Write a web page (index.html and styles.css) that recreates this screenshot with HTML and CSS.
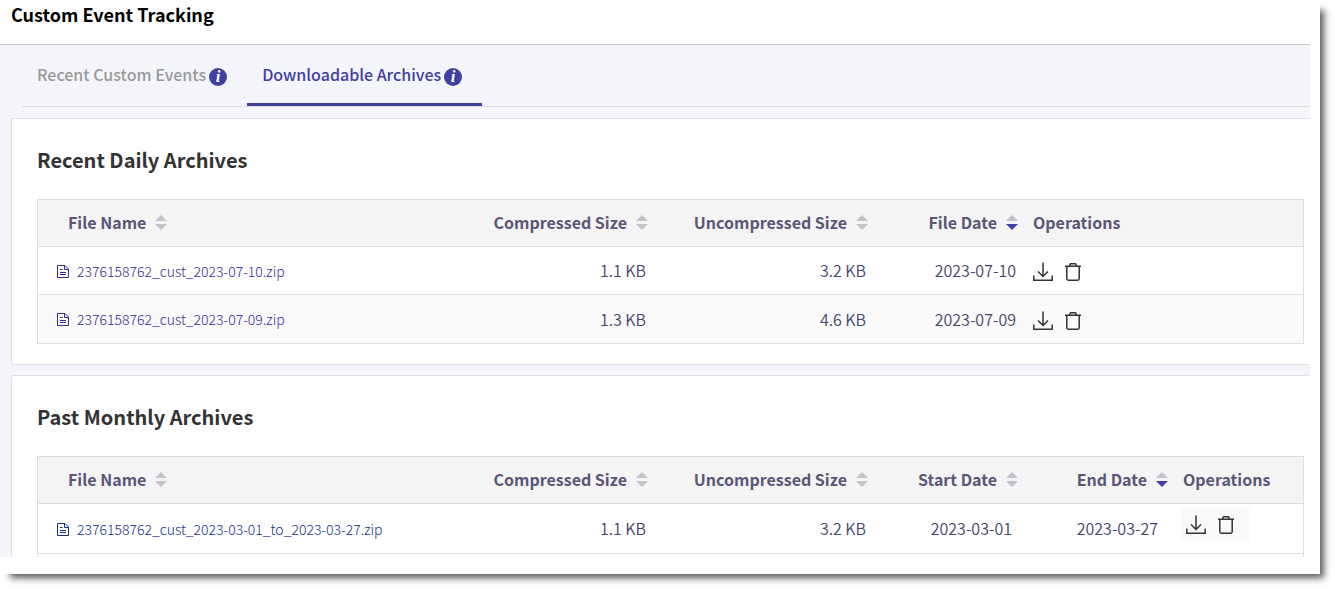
FILE: index.html
```html
<!DOCTYPE html>
<html lang="en">
<head>
    <meta charset="UTF-8">
    <meta name="viewport" content="width=device-width, initial-scale=1.0">
    <title>Custom Event Tracking</title>
    <link rel="stylesheet" href="styles.css">
</head>
<body>

<!-- Shared icons -->
<svg class="icon-defs" aria-hidden="true">
    <symbol id="icon-sort" viewBox="0 0 12 15">
        <path class="sort-up" d="M6 0 L12 6 H0 Z"/>
        <path class="sort-down" d="M0 9 H12 L6 15 Z"/>
    </symbol>
    <symbol id="icon-sort-desc" viewBox="0 0 12 15">
        <path class="sort-up" d="M6 0 L12 6 H0 Z"/>
        <path class="sort-active" d="M0 9 H12 L6 15 Z"/>
    </symbol>
    <symbol id="icon-file" viewBox="0 0 12 14">
        <path d="M0.5 1.5 H8 L11.5 5 V13.5 H0.5 Z M7.5 1.5 V5.5 H11.5 M3 5.5 H5.5 M3 8.5 H9 M3 10.5 H9" fill="none" stroke="currentColor"/>
    </symbol>
    <symbol id="icon-download" viewBox="0 0 20 20">
        <path d="M10 0.5 V14 M5 9.5 L10 14.5 L15 9.5 M0.8 13.5 V18.3 H19.2 V13.5" fill="none" stroke="currentColor" stroke-width="1.5"/>
    </symbol>
    <symbol id="icon-trash" viewBox="0 0 16 20">
        <path d="M0 4.3 H16 M4.5 4 L5.5 1.7 H10.5 L11.5 4 M1.8 4.3 V16.5 Q1.8 18.2 3.3 18.2 H12.7 Q14.2 18.2 14.2 16.5 V4.3" fill="none" stroke="currentColor" stroke-width="1.5"/>
    </symbol>
</svg>

<div class="window">
    <div class="page">
        <header class="page-header">
            <h1>Custom Event Tracking</h1>
        </header>

        <main class="content">
            <!-- Tabs -->
            <nav class="tabs">
                <a href="#recent" class="tab">Recent Custom Events <span class="info">i</span></a>
                <a href="#archives" class="tab active">Downloadable Archives <span class="info">i</span></a>
            </nav>

            <!-- Daily archives -->
            <section class="card">
                <h2>Recent Daily Archives</h2>
                <table class="archives">
                    <thead>
                        <tr>
                            <th class="col-name"><button>File Name <svg class="sort"><use href="#icon-sort"/></svg></button></th>
                            <th class="col-size"><button>Compressed Size <svg class="sort"><use href="#icon-sort"/></svg></button></th>
                            <th class="col-size"><button>Uncompressed Size <svg class="sort"><use href="#icon-sort"/></svg></button></th>
                            <th class="col-date"><button>File Date <svg class="sort"><use href="#icon-sort-desc"/></svg></button></th>
                            <th class="col-ops">Operations</th>
                        </tr>
                    </thead>
                    <tbody>
                        <tr>
                            <td class="col-name"><a href="#"><svg class="file"><use href="#icon-file"/></svg>2376158762_cust_2023-07-10.zip</a></td>
                            <td class="col-size">1.1 KB</td>
                            <td class="col-size">3.2 KB</td>
                            <td class="col-date">2023-07-10</td>
                            <td class="col-ops">
                                <div class="ops">
                                    <button aria-label="Download"><svg class="download"><use href="#icon-download"/></svg></button>
                                    <button aria-label="Delete"><svg class="trash"><use href="#icon-trash"/></svg></button>
                                </div>
                            </td>
                        </tr>
                        <tr>
                            <td class="col-name"><a href="#"><svg class="file"><use href="#icon-file"/></svg>2376158762_cust_2023-07-09.zip</a></td>
                            <td class="col-size">1.3 KB</td>
                            <td class="col-size">4.6 KB</td>
                            <td class="col-date">2023-07-09</td>
                            <td class="col-ops">
                                <div class="ops">
                                    <button aria-label="Download"><svg class="download"><use href="#icon-download"/></svg></button>
                                    <button aria-label="Delete"><svg class="trash"><use href="#icon-trash"/></svg></button>
                                </div>
                            </td>
                        </tr>
                    </tbody>
                </table>
            </section>

            <!-- Monthly archives -->
            <section class="card">
                <h2>Past Monthly Archives</h2>
                <table class="archives monthly">
                    <thead>
                        <tr>
                            <th class="col-name"><button>File Name <svg class="sort"><use href="#icon-sort"/></svg></button></th>
                            <th class="col-size"><button>Compressed Size <svg class="sort"><use href="#icon-sort"/></svg></button></th>
                            <th class="col-size"><button>Uncompressed Size <svg class="sort"><use href="#icon-sort"/></svg></button></th>
                            <th class="col-date"><button>Start Date <svg class="sort"><use href="#icon-sort"/></svg></button></th>
                            <th class="col-date"><button>End Date <svg class="sort"><use href="#icon-sort-desc"/></svg></button></th>
                            <th class="col-ops">Operations</th>
                        </tr>
                    </thead>
                    <tbody>
                        <tr>
                            <td class="col-name"><a href="#"><svg class="file"><use href="#icon-file"/></svg>2376158762_cust_2023-03-01_to_2023-03-27.zip</a></td>
                            <td class="col-size">1.1 KB</td>
                            <td class="col-size">3.2 KB</td>
                            <td class="col-date">2023-03-01</td>
                            <td class="col-date">2023-03-27</td>
                            <td class="col-ops">
                                <div class="ops">
                                    <button aria-label="Download"><svg class="download"><use href="#icon-download"/></svg></button>
                                    <button aria-label="Delete"><svg class="trash"><use href="#icon-trash"/></svg></button>
                                </div>
                            </td>
                        </tr>
                        <tr class="empty">
                            <td colspan="6"></td>
                        </tr>
                    </tbody>
                </table>
            </section>
        </main>
    </div>
</div>

</body>
</html>
```
FILE: styles.css
```css
* {
    box-sizing: border-box;
}

body {
    margin: 0;
    height: 100vh;
    padding: 0 15px 15px 0;
    background-color: #fff;
    font-family: "Noto Sans CJK SC", "Noto Sans", sans-serif;
    font-size: 16px;
    line-height: 24px;
    color: #44446a;
    overflow: hidden;
}

button {
    padding: 0;
    border: none;
    background: none;
    font: inherit;
    color: inherit;
    cursor: pointer;
}

a {
    text-decoration: none;
}

.icon-defs {
    display: none;
}

/* Window frame with its shadow */
.window {
    height: 100%;
    padding: 0 10px 17px 0;
    background-color: #fff;
    box-shadow: 7px 7px 7px -3px rgba(0, 0, 0, 0.65);
}

.page {
    display: flex;
    flex-direction: column;
    height: 100%;
    overflow: hidden;
}

.page-header {
    flex: none;
    height: 45px;
    padding: 2px 11px;
    border-bottom: 1px solid #c6c6c6;
}

h1 {
    margin: 0;
    font-size: 18px;
    font-weight: bold;
    line-height: 24px;
    color: #000;
}

.content {
    flex: 1;
    min-height: 0;
    overflow: hidden;
    padding-left: 11px;
    background-color: #f4f5fa;
}

/* Tabs */
.tabs {
    display: flex;
    height: 62px;
    margin: 0 0 11px 11px;
    border-bottom: 1px solid #dedee2;
}

.tab {
    display: flex;
    gap: 3px;
    padding: 17px 20px 0 15px;
    border-bottom: 3px solid transparent;
    font-weight: 500;
    color: #999;
}

.tab.active {
    border-bottom-color: #4040a0;
    color: #4040a0;
}

.info {
    width: 18px;
    height: 18px;
    margin-top: 6px;
    border-radius: 50%;
    background-color: #4040a0;
    color: #fff;
    font-family: "Liberation Serif", serif;
    font-size: 17px;
    font-style: italic;
    font-weight: bold;
    line-height: 18px;
    text-align: center;
}

/* Cards */
.card {
    margin-bottom: 10px;
    padding: 27px 6px 20px 25px;
    border: 1px solid #e0e0e0;
    border-right: none;
    border-radius: 3px 0 0 3px;
    background-color: #fff;
}

h2 {
    margin: 0 0 25px;
    font-size: 20px;
    font-weight: bold;
    line-height: 28px;
    color: #333;
}

/* Archive tables */
.archives {
    width: 100%;
    border: 1px solid #dedede;
    border-spacing: 0;
    table-layout: fixed;
}

.archives th,
.archives td {
    height: 48px;
    padding: 0;
    border-bottom: 1px solid #dedede;
    text-align: right;
    white-space: nowrap;
}

.archives th {
    height: 47px;
    padding-bottom: 2px;
    background-color: #f4f4f4;
    font-weight: bold;
    color: #5b5678;
}

.archives td {
    padding-bottom: 1px;
    font-weight: 350;
}

.archives th button {
    display: inline-flex;
    align-items: center;
    gap: 9px;
}

.archives tbody tr:nth-child(even) {
    background-color: #fafafa;
}

.archives tbody tr:last-child td {
    border-bottom: none;
}

.archives .col-name {
    width: 400px;
    text-align: left;
}

.archives th.col-name {
    padding-left: 30px;
}

.archives td.col-name {
    padding-bottom: 0;
    padding-left: 19px;
    font-size: 14px;
    font-weight: 300;
}

.col-name a {
    display: flex;
    align-items: center;
    gap: 8px;
    color: #35299a;
}

.archives .col-size {
    width: 220px;
    padding-right: 12px;
}

.archives .col-date {
    width: 150px;
    padding-right: 12px;
}

.archives th.col-size,
.archives th.col-date {
    padding-right: 10px;
}

.archives .col-ops {
    padding-left: 5px;
    text-align: left;
}

.ops {
    display: flex;
    gap: 12px;
    padding-top: 4px;
    color: #333;
}

.ops button {
    display: flex;
}

.monthly td {
    height: 50px;
}

.monthly td.col-date {
    padding-right: 16px;
}

.monthly td.col-date + .col-date {
    padding-right: 20px;
}

.monthly .col-name a {
    color: #12308c;
}

.monthly td.col-ops {
    padding-left: 3px;
}

.monthly .ops {
    width: 69px;
    height: 33px;
    margin-bottom: 7px;
    padding: 7px 5px;
    background-color: #fafafa;
}

.monthly tbody tr.empty {
    background-color: #fff;
}

/* Icons */
.sort {
    width: 12px;
    height: 15px;
}

.sort-up,
.sort-down {
    fill: #c2c1cc;
}

.sort-active {
    fill: #4040a0;
}

.file {
    width: 12px;
    height: 14px;
}

.download {
    width: 20px;
    height: 20px;
}

.trash {
    width: 16px;
    height: 20px;
}
```
